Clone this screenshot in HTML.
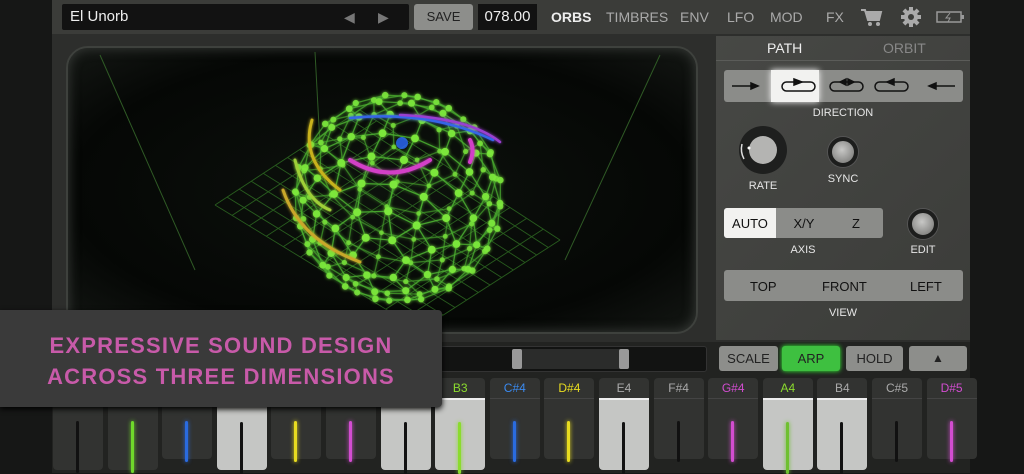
<!DOCTYPE html>
<html><head><meta charset="utf-8"><style>
*{margin:0;padding:0;box-sizing:border-box}
body{width:1024px;height:473px;overflow:hidden;background:#161716;font-family:"Liberation Sans",sans-serif;position:relative}
.abs{position:absolute}
.top{left:52px;top:0;width:918px;height:34px;background:#3b3c39}
.name{left:62px;top:4px;width:347px;height:26px;background:#121212;border-radius:2px;color:#eee;font-size:15px;line-height:26px;padding-left:8px}
.btn{background:#8d8e8b;border-radius:3px;color:#222;text-align:center;font-size:13px}
.tab{color:#aaa;font-size:14px;top:9px}
.main{left:52px;top:34px;width:918px;height:312px;background:#2d2e2c}
.screen{left:66px;top:46px;width:632px;height:288px;border-radius:22px;background:radial-gradient(ellipse at 50% 50%,#0d120d 0%,#050705 70%,#141714 100%);box-shadow:inset 0 0 12px #3a3d3a;border:2px solid #3e413d;overflow:hidden}
.panel{left:716px;top:36px;width:254px;height:304px;background:linear-gradient(135deg,#474845,#3b3c39)}
.seg{background:#8b8c89;border-radius:3px}
.lbl{color:#e6e6e6;font-size:11px;text-align:center}
.knob{border-radius:50%;background:radial-gradient(circle at 45% 40%,#c8c8c6,#8a8a88 70%);border:4px solid #1d1e1d;box-shadow:0 0 0 1px #555}
.key{position:absolute;top:378px;width:50px;border-radius:4px;background:#323331}
.key .t{height:20px;text-align:center;font-size:12px;line-height:20px;color:#aaa}
.key .b{position:absolute;left:0;right:0;top:20px;bottom:0;border-top:1px solid #444}
.key.w .b{background:#c5c6c4;border-top:2px solid #eee;border-radius:0 0 4px 4px}
.key .ln{position:absolute;left:23px;width:3px;top:22px;height:52px;border-radius:2px}
</style></head><body>
<div class="abs top"></div>
<div class="abs name">El Unorb<span style="position:absolute;left:282px;color:#777;font-size:14px">◀</span><span style="position:absolute;left:316px;color:#777;font-size:14px">▶</span></div>
<div class="abs btn" style="left:414px;top:4px;width:59px;height:26px;line-height:26px">SAVE</div>
<div class="abs" style="left:478px;top:4px;width:59px;height:26px;background:#121212;color:#eee;font-size:15px;line-height:26px;text-align:center">078.00</div>
<div class="abs tab" style="left:551px;color:#eee;font-weight:bold">ORBS</div>
<div class="abs tab" style="left:606px">TIMBRES</div>
<div class="abs tab" style="left:680px">ENV</div>
<div class="abs tab" style="left:727px">LFO</div>
<div class="abs tab" style="left:770px">MOD</div>
<div class="abs tab" style="left:826px">FX</div>
<svg class="abs" style="left:860px;top:7px" width="24" height="20"><path d="M1 3h4l3 10h11l2-8H6" fill="#aaa" stroke="#aaa" stroke-width="2"/><circle cx="10" cy="17" r="2" fill="#aaa"/><circle cx="18" cy="17" r="2" fill="#aaa"/></svg>
<svg class="abs" style="left:900px;top:6px" width="22" height="22" viewBox="0 0 22 22"><g fill="#aaa"><circle cx="11" cy="11" r="7"/><rect x="9" y="1" width="4" height="20"/><rect x="1" y="9" width="20" height="4"/><rect x="9" y="1" width="4" height="20" transform="rotate(45 11 11)"/><rect x="9" y="1" width="4" height="20" transform="rotate(-45 11 11)"/></g><circle cx="11" cy="11" r="3" fill="#3b3c39"/></svg>
<svg class="abs" style="left:936px;top:10px" width="30" height="14"><rect x="1" y="2" width="24" height="10" fill="none" stroke="#999" stroke-width="1.5"/><rect x="25" y="5" width="3" height="4" fill="#999"/><path d="M14 3l-4 5h4l-2 4" stroke="#999" fill="none"/></svg>

<div class="abs main"></div>
<div class="abs screen">
<svg width="632" height="288" viewBox="66 46 632 288" style="position:absolute;left:-2px;top:-2px">
<defs><filter id="gl" x="-20%" y="-20%" width="140%" height="140%"><feGaussianBlur stdDeviation="1.6" result="b"/><feMerge><feMergeNode in="b"/><feMergeNode in="SourceGraphic"/></feMerge></filter></defs>
<g stroke="#2f5a25" stroke-width="1" fill="none">
<path d="M100 55 L195 270 M315 52 L320 145 M660 55 L565 260"/>
</g>
<g id="grid" stroke="#2e6a22" stroke-width="0.9" fill="none" opacity="0.85"></g>
<g id="sph" filter="url(#gl)"></g>
<g fill="none" stroke-linecap="round" filter="url(#gl)">
<path d="M350 160 Q390 185 430 160" stroke="#d23fc7" stroke-width="4"/>
<path d="M350 118 Q430 110 493 140" stroke="#3565e8" stroke-width="2.5"/>
<path d="M400 115 Q470 118 500 142" stroke="#9a3fd0" stroke-width="2.5"/>
<path d="M470 140 Q475 150 470 162" stroke="#d23fc7" stroke-width="4"/>
<path d="M312 120 Q300 160 340 190" stroke="#c9b21f" stroke-width="3"/>
<path d="M283 190 Q300 240 360 262" stroke="#c9a72a" stroke-width="3"/>
<path d="M295 160 Q305 200 330 210" stroke="#9fcf38" stroke-width="3"/>
</g>
<circle cx="402" cy="143" r="6" fill="#2c6bff" opacity="0.8"/>
</svg></div>

<div class="abs panel"></div>
<div class="abs" style="left:716px;top:36px;width:254px;height:25px;border-bottom:1px solid #5b5c59"></div>
<div class="abs" style="left:767px;top:40px;color:#eee;font-size:14px">PATH</div>
<div class="abs" style="left:883px;top:40px;color:#888;font-size:14px">ORBIT</div>
<div class="abs seg" style="left:724px;top:70px;width:239px;height:32px"></div>
<div class="abs" style="left:771px;top:70px;width:48px;height:32px;background:#f2f2f0;box-shadow:0 0 6px #fff"></div>
<svg class="abs" style="left:724px;top:70px" width="239" height="32">
<g stroke="#111" stroke-width="1.5" fill="none">
<path d="M8 16h26"/><path d="M34 16l-7-3v6z" fill="#111"/>
<rect x="58" y="12" width="33" height="9" rx="4.5"/><path d="M70 9l8 3-8 3z" fill="#111"/>
<rect x="106" y="12" width="33" height="9" rx="4.5"/><path d="M122 9l-6 3 6 3zM124 9l6 3-6 3z" fill="#111"/>
<rect x="151" y="12" width="33" height="9" rx="4.5"/><path d="M170 9l-7 3 7 3z" fill="#111"/>
<path d="M205 16h26"/><path d="M205 16l7-3v6z" fill="#111"/>
</g></svg>
<div class="abs lbl" style="left:783px;top:107px;width:120px">DIRECTION</div>
<svg class="abs" style="left:736px;top:126px" width="54" height="54"><circle cx="27" cy="24" r="24" fill="#1e1f1e"/><path d="M8 33 A21 21 0 0 1 6 18" stroke="#ddd" stroke-width="1.5" fill="none"/><circle cx="27" cy="24" r="14" fill="#b4b4b2"/><circle cx="13" cy="22" r="1.5" fill="#fff"/></svg>
<div class="abs lbl" style="left:743px;top:180px;width:40px">RATE</div>
<div class="abs knob" style="left:828px;top:137px;width:30px;height:30px"></div>
<div class="abs lbl" style="left:823px;top:173px;width:40px">SYNC</div>
<div class="abs seg" style="left:724px;top:208px;width:159px;height:30px"></div>
<div class="abs" style="left:724px;top:208px;width:52px;height:30px;background:#f2f2f0;border-radius:3px 0 0 3px"></div>
<div class="abs" style="left:724px;top:216px;width:52px;text-align:center;font-size:13px;color:#111">AUTO</div>
<div class="abs" style="left:778px;top:216px;width:52px;text-align:center;font-size:13px;color:#111">X/Y</div>
<div class="abs" style="left:830px;top:216px;width:52px;text-align:center;font-size:13px;color:#111">Z</div>
<div class="abs lbl" style="left:783px;top:244px;width:40px">AXIS</div>
<div class="abs knob" style="left:908px;top:209px;width:30px;height:30px"></div>
<div class="abs lbl" style="left:903px;top:244px;width:40px">EDIT</div>
<div class="abs seg" style="left:724px;top:270px;width:239px;height:31px"></div>
<div class="abs" style="left:750px;top:279px;font-size:13px;color:#111">TOP</div>
<div class="abs" style="left:822px;top:279px;font-size:13px;color:#111">FRONT</div>
<div class="abs" style="left:910px;top:279px;font-size:13px;color:#111">LEFT</div>
<div class="abs lbl" style="left:823px;top:307px;width:40px">VIEW</div>

<div class="abs" style="left:52px;top:342px;width:918px;height:131px;background:#222321"></div>
<div class="abs" style="left:440px;top:346px;width:267px;height:26px;background:#121312;border-radius:3px;border:1px solid #333"></div>
<div class="abs" style="left:513px;top:349px;width:114px;height:20px;background:#2b2c2b"></div>
<div class="abs" style="left:512px;top:349px;width:10px;height:20px;background:#999;border-radius:2px"></div>
<div class="abs" style="left:619px;top:349px;width:10px;height:20px;background:#999;border-radius:2px"></div>
<div class="abs btn" style="left:719px;top:346px;width:59px;height:25px;line-height:25px">SCALE</div>
<div class="abs btn" style="left:782px;top:346px;width:58px;height:25px;line-height:25px;background:#3ec040;box-shadow:0 0 5px #3f3">ARP</div>
<div class="abs btn" style="left:846px;top:346px;width:57px;height:25px;line-height:25px">HOLD</div>
<div class="abs btn" style="left:909px;top:346px;width:58px;height:25px;line-height:24px;font-size:12px">▲</div>
<div id="keys"></div>

<div class="abs" style="left:0;top:310px;width:442px;height:97px;background:#3a3a3a;border-radius:0 4px 4px 0;box-shadow:0 2px 6px #000"></div>
<div class="abs" style="left:0;top:330px;width:442px;text-align:center;color:#c85aa9;font-weight:bold;font-size:22px;letter-spacing:1.2px;line-height:31px">EXPRESSIVE SOUND DESIGN<br>ACROSS THREE DIMENSIONS</div>

<script>
var keys=[["",0,"#111",0],["",0,"#6fd82b",0],["",0,"#2a6be0",0],["",1,"#111",0],["",0,"#e8dc20",0],["",0,"#d24dd0",0],["",1,"#111",0],["B3",1,"#8bdb2e","#8bdb2e"],["C#4",0,"#2a6be0","#3a8af0"],["D#4",0,"#e8dc20","#e8dc20"],["E4",1,"#111","#aaa"],["F#4",0,"#111","#aaa"],["G#4",0,"#d24dd0","#d24dd0"],["A4",1,"#6fc030","#8bdb2e"],["B4",1,"#111","#aaa"],["C#5",0,"#111","#aaa"],["D#5",0,"#d24dd0","#d24dd0"]];
var h="";keys.forEach(function(k,i){var x=53+i*54.6;var ht=k[1]||i<2?92:81;
h+='<div class="key'+(k[1]?' w':'')+'" style="left:'+x+'px;height:'+ht+'px"><div class="t" style="color:'+(k[3]||'#aaa')+'">'+k[0]+'</div><div class="b"><div class="ln" style="background:'+k[2]+';height:'+(ht-40)+'px;'+(k[2]!='#111'?'box-shadow:0 0 4px '+k[2]:'')+'"></div></div></div>';});
document.getElementById("keys").innerHTML=h;
var g="";for(var i=0;i<=12;i++){var t=i/12;var ax=215+t*(360-215),ay=205+t*(110-205);var bx=420+t*(560-420),by=330+t*(240-330);g+='<path d="M'+ax+' '+ay+'L'+bx+' '+by+'"/>';}
for(var i=0;i<=12;i++){var t=i/12;var ax=215+t*(420-215),ay=205+t*(330-205);var bx=360+t*(560-360),by=110+t*(240-110);g+='<path d="M'+ax+' '+ay+'L'+bx+' '+by+'"/>';}
document.getElementById("grid").innerHTML=g;
var cx=398,cy=198,R=104;
function proj(la,lo){var a=la*Math.PI/180,b=lo*Math.PI/180;var x=Math.cos(a)*Math.cos(b),y=Math.sin(a),z=Math.cos(a)*Math.sin(b);
var y2=y*Math.cos(0.9)-z*Math.sin(0.9),z2=y*Math.sin(0.9)+z*Math.cos(0.9);var x2=x*Math.cos(0.3)-y2*Math.sin(0.3),y3=x*Math.sin(0.3)+y2*Math.cos(0.3);return [cx+x2*R,cy+y3*R,z2];}
var rings=[];for(var la=-75;la<=75;la+=15){var n=Math.max(6,Math.round(20*Math.cos(la*Math.PI/180)));var r=[];for(var j=0;j<n;j++)r.push(proj(la,j*360/n+la));rings.push(r);}
var s="";
rings.forEach(function(r,ri){r.forEach(function(p,j){var q=r[(j+1)%r.length];s+='<line x1="'+p[0]+'" y1="'+p[1]+'" x2="'+q[0]+'" y2="'+q[1]+'" stroke="#4cb030" stroke-width="1.3" opacity="'+(0.55+0.35*(p[2]+1)/2)+'"/>';
if(ri+1<rings.length){var nr=rings[ri+1];var best=null,bd=1e9;nr.forEach(function(u){var d=Math.hypot(u[0]-p[0],u[1]-p[1])+40*Math.abs(u[2]-p[2]);if(d<bd){bd=d;best=u;}});s+='<line x1="'+p[0]+'" y1="'+p[1]+'" x2="'+best[0]+'" y2="'+best[1]+'" stroke="#4cb030" stroke-width="1.3" opacity="'+(0.55+0.35*(p[2]+1)/2)+'"/>';}});});
rings.forEach(function(r){r.forEach(function(p){s+='<circle cx="'+p[0]+'" cy="'+p[1]+'" r="'+(3.2+p[2]*0.9)+'" fill="#7de83c" opacity="'+(0.7+0.3*(p[2]+1)/2)+'"/>';});});
document.getElementById("sph").innerHTML=s;
</script>
</body></html>
